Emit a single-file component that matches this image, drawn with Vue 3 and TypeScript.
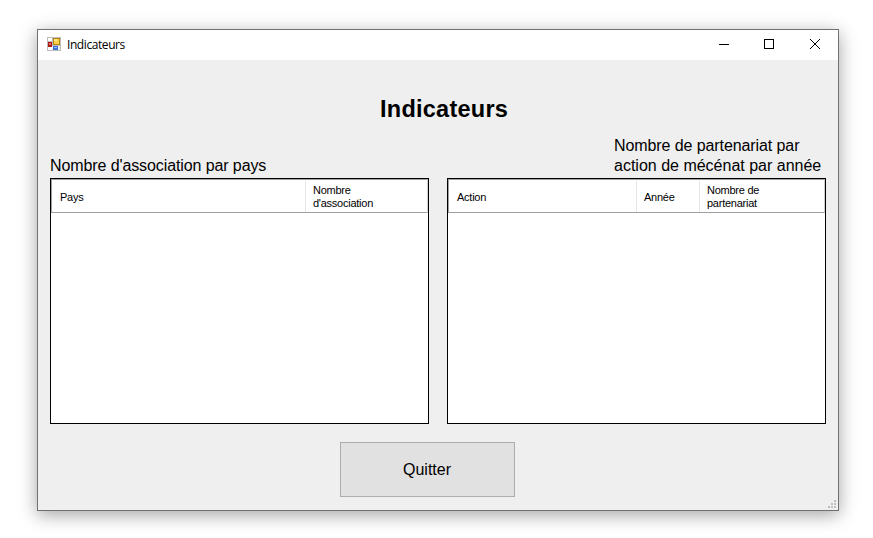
<script setup lang="ts">
interface Column {
  id: string
  lines: string[]
}

const countryColumns: Column[] = [
  { id: 'pays', lines: ['Pays'] },
  { id: 'nombre-association', lines: ['Nombre', "d'association"] },
]

const actionColumns: Column[] = [
  { id: 'action', lines: ['Action'] },
  { id: 'annee', lines: ['Année'] },
  { id: 'nombre-partenariat', lines: ['Nombre de', 'partenariat'] },
]
</script>

<template>
  <div class="desktop">
    <div class="window">
      <header class="titlebar">
        <svg class="app-icon" width="14" height="14" viewBox="0 0 14 14" shape-rendering="crispEdges">
          <rect width="14" height="14" fill="#bdbdbd" />
          <rect x="1" y="1" width="4" height="3" fill="#fff" />
          <rect x="1" y="10" width="4" height="3" fill="#fff" />
          <rect x="5" y="9" width="8" height="4" fill="#e8effa" />
          <rect x="6" y="1" width="7" height="7" fill="#b8860b" />
          <rect x="7" y="2" width="5" height="5" fill="#fcd048" />
          <rect x="7" y="2" width="3" height="2" fill="#ffe694" />
          <rect x="1" y="5" width="4" height="5" fill="#a81818" />
          <rect x="2" y="6" width="2" height="2" fill="#e86a60" />
          <rect x="6" y="9" width="5" height="4" fill="#3f74d6" />
          <rect x="7" y="10" width="3" height="1" fill="#8fb6f5" />
        </svg>
        <span class="caption">Indicateurs</span>
        <div class="controls">
          <svg width="46" height="30" viewBox="0 0 46 30" shape-rendering="crispEdges">
            <rect x="18" y="14" width="10" height="1" />
          </svg>
          <svg width="45" height="30" viewBox="0 0 45 30" shape-rendering="crispEdges">
            <rect x="17.5" y="9.5" width="9" height="9" fill="none" stroke="#000" />
          </svg>
          <svg width="46" height="30" viewBox="0 0 46 30">
            <path d="M18 9l10 10M28 9l-10 10" fill="none" stroke="#000" stroke-width="1" />
          </svg>
        </div>
      </header>
      <main class="content">
        <h1 class="heading">Indicateurs</h1>
        <div class="panels">
          <section class="panel">
            <p class="label"><span class="tight">Nombre d'association par pays</span></p>
            <div class="list">
              <div class="columns countries">
                <div v-for="c in countryColumns" :key="c.id" class="column" :class="{ double: c.lines.length > 1 }">
                  <span v-for="l in c.lines" :key="l" class="line">{{ l }}</span>
                </div>
              </div>
            </div>
          </section>
          <section class="panel">
            <p class="label right"><span class="tight">Nombre de partenariat par</span><br />action de mécénat par année</p>
            <div class="list">
              <div class="columns actions">
                <div v-for="c in actionColumns" :key="c.id" class="column" :class="{ double: c.lines.length > 1 }">
                  <span v-for="l in c.lines" :key="l" class="line">{{ l }}</span>
                </div>
              </div>
            </div>
          </section>
        </div>
        <button class="quit" type="button">Quitter</button>
        <svg class="grip" width="8" height="8" viewBox="0 0 8 8" fill="#bfbfbf" shape-rendering="crispEdges">
          <path d="M6 0h2v2h-2zM3 3h2v2h-2zM6 3h2v2h-2zM0 6h2v2h-2zM3 6h2v2h-2zM6 6h2v2h-2z" />
        </svg>
      </main>
    </div>
  </div>
</template>

<style scoped>
.desktop {
  box-sizing: border-box;
  width: 873px;
  height: 538px;
  padding: 29px 34px 27px 37px;
  overflow: hidden;
  background: #fff;
  color: #000;
  font-family: "Liberation Sans", Arial, sans-serif;
}
.window {
  box-sizing: border-box;
  width: 802px;
  height: 482px;
  border: 1px solid #707070;
  background: #efefef;
  box-shadow: 0 4px 17px 0 rgba(0, 0, 0, 0.36);
}
.titlebar {
  display: flex;
  align-items: center;
  height: 30px;
  padding-left: 9px;
  background: #fff;
}
.app-icon {
  margin-top: -2px;
}
.caption {
  margin-left: 6px;
  font: 12px/16px "Open Sans", sans-serif;
  letter-spacing: -0.42px;
}
.controls {
  display: flex;
  margin-left: auto;
}
.content {
  position: relative;
  display: flex;
  flex-direction: column;
  height: 450px;
}
.heading {
  margin: 35px 0 0 342px;
  font-size: 23.5px;
  line-height: 28px;
  font-weight: 700;
  letter-spacing: 0.25px;
}
.panels {
  display: flex;
  gap: 18px;
  margin: 13px 0 0 12px;
}
.panel {
  width: 379px;
}
.label {
  display: flex;
  align-items: flex-end;
  height: 40px;
  margin: 0 0 2px;
  font-size: 16px;
  line-height: 20px;
}
.label.right {
  display: block;
  padding-left: 167px;
  white-space: nowrap;
}
.label .tight {
  letter-spacing: -0.09px;
}
.label:not(.right) .tight {
  letter-spacing: -0.1px;
}
.list {
  box-sizing: border-box;
  height: 246px;
  border: 1px solid #000;
  background: #fff;
}
.columns {
  display: grid;
  box-sizing: border-box;
  height: 34px;
  border: 1px solid #a0a0a0;
  border-right-color: #d0d0d0;
}
.countries {
  grid-template-columns: 254px 1fr;
}
.actions {
  grid-template-columns: 188px 63px 1fr;
}
.column {
  display: flex;
  flex-direction: column;
  justify-content: center;
  margin-top: 1px;
  padding: 2px 0 0 8px;
  border-right: 1px solid #e5e5e5;
  font-size: 11px;
  line-height: 13px;
  letter-spacing: -0.25px;
}
.column:last-child {
  border-right: 0;
}
.column + .column {
  padding-left: 7px;
}
.column.double {
  padding-top: 0;
}
.line {
  white-space: nowrap;
}
.quit {
  box-sizing: border-box;
  width: 175px;
  height: 55px;
  margin: 18px 0 0 302px;
  padding: 0 1px 0 0;
  border: 1px solid #adadad;
  background: #e1e1e1;
  color: #000;
  font: 16px/20px "Liberation Sans", Arial, sans-serif;
}
.grip {
  position: absolute;
  right: 2px;
  bottom: 2px;
}
</style>
